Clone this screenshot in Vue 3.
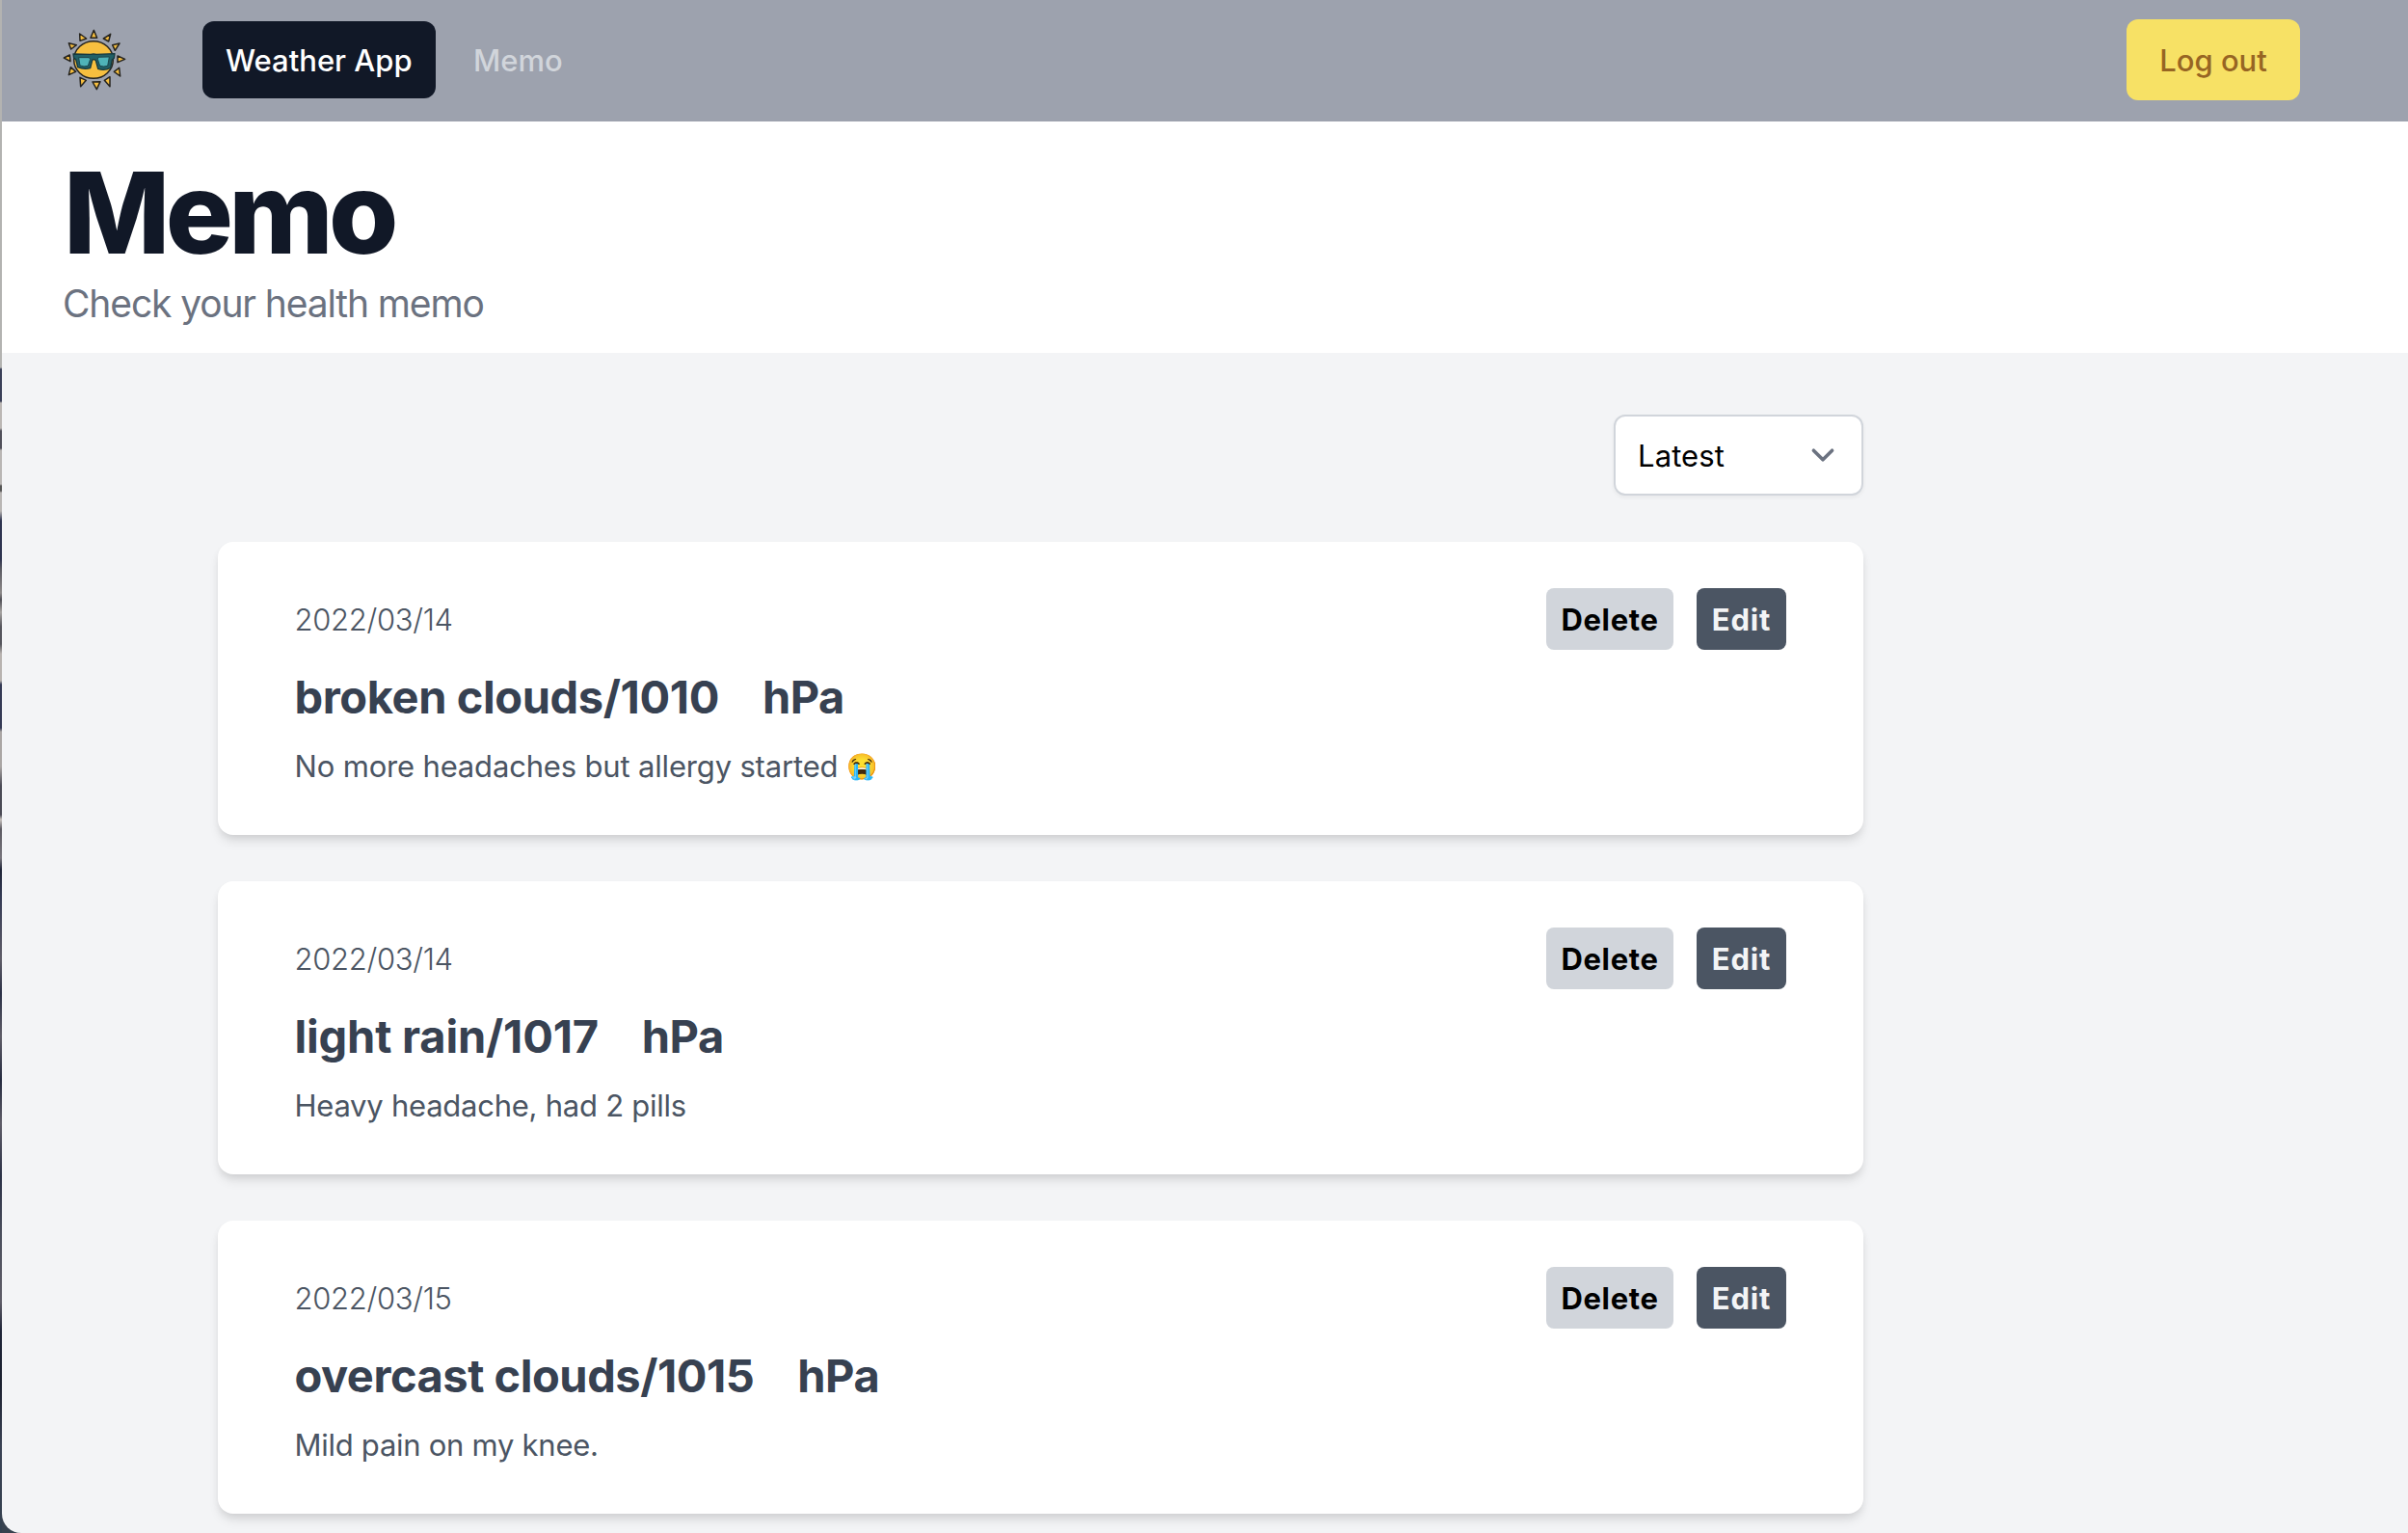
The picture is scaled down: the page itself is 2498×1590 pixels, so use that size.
<script setup>
const memos = [
  {
    id: 1,
    date: '2022/03/14',
    weather: 'broken clouds',
    pressure: 1010,
    text: 'No more headaches but allergy started',
    emoji: '😭',
    titleTracking: -0.4,
    textTracking: -0.17
  },
  {
    id: 2,
    date: '2022/03/14',
    weather: 'light rain',
    pressure: 1017,
    text: 'Heavy headache, had 2 pills',
    titleTracking: -0.2,
    textTracking: -0.25
  },
  {
    id: 3,
    date: '2022/03/15',
    weather: 'overcast clouds',
    pressure: 1015,
    text: 'Mild pain on my knee.',
    titleTracking: -0.476,
    textTracking: -0.27
  }
]

const rays = [
  '127,34 117,58 137,58',
  '83,45 84,67 104,60',
  '179,46 157,60 173,69',
  '49,74 56,93 73,80',
  '207,75 185,80 193,97',
  '34,120 52,111 54,131',
  '224,124 201,114 201,134',
  '49,173 55,149 71,163',
  '209,177 206,151 190,163',
  '86,209 84,181 103,190',
  '136,218 123,195 147,194',
  '177,209 177,179 160,190'
]
</script>

<template>
  <div class="desktop">
    <div class="window">
      <nav class="nav">
        <svg class="logo" viewBox="0 0 255 255" aria-hidden="true">
          <g fill="#f7bf3f" stroke="#26241f" stroke-width="4.5" stroke-linejoin="round">
            <polygon v-for="ray in rays" :key="ray" :points="ray" />
            <ellipse cx="126" cy="126" rx="61" ry="58" />
          </g>
          <g stroke="#17393f" stroke-linejoin="round">
            <path
              d="M63 108 L117 109 Q126 107 135 109 L192 107 L190 121 L184 126 L179 151 Q160 161 140 154 L133 128 Q126 122 122 128 L116 152 Q96 157 77 149 L71 125 L65 121 Z"
              fill="#216067"
              stroke-width="4"
            />
            <path d="M80 119 L112 119 L116 124 L109 145 Q96 149 84 144 Z" fill="#4fb3b8" stroke-width="2.5" />
            <path d="M141 118 L175 117 L170 145 Q158 149 146 145 L139 124 Z" fill="#4fb3b8" stroke-width="2.5" />
          </g>
        </svg>
        <a class="link active">Weather App</a>
        <a class="link">Memo</a>
        <button class="logout">Log out</button>
      </nav>

      <header class="header">
        <h1>Memo</h1>
        <p>Check your health memo</p>
      </header>

      <main class="content">
        <div class="sort">
          <span>Latest</span>
          <svg viewBox="0 0 20 20" aria-hidden="true">
            <path d="M6 8l4 4 4-4" fill="none" stroke="#6b7280" stroke-width="1.5" stroke-linecap="round" stroke-linejoin="round" />
          </svg>
        </div>

        <article v-for="memo in memos" :key="memo.id" class="card">
          <div class="top">
            <time>{{ memo.date }}</time>
            <button class="btn delete">Delete</button>
            <button class="btn edit">Edit</button>
          </div>
          <h2>
            <span :style="{ letterSpacing: memo.titleTracking + 'px' }">{{ memo.weather }}/{{ memo.pressure }}</span>
            <span class="unit">hPa</span>
          </h2>
          <p class="note">
            <span :style="{ letterSpacing: memo.textTracking + 'px' }">{{ memo.text }}</span>
            <span v-if="memo.emoji" class="emoji">{{ memo.emoji }}</span>
          </p>
        </article>
      </main>
    </div>
  </div>
</template>

<style>
body {
  margin: 0;
  overflow: hidden;
}
</style>

<style scoped>
.desktop {
  box-sizing: border-box;
  width: 100vw;
  height: 100vh;
  padding-left: 2px;
  overflow: hidden;
  font-family: Inter, 'Liberation Sans', sans-serif;
  background:
    linear-gradient(
      #b3b3b1 381px, #3a4058 383px, #3a4058 416px, #bbb7b4 418px, #bbb7b4 444px,
      #50505a 447px, #50505a 465px, #b9b6b4 467px, #b9b6b4 502px, #555 504px,
      #555 509px, #b9b6b4 511px, #b9b6b4 530px, #2e3450 540px, #2e3450 580px,
      #5a5a62 590px, #8d8a8a 615px, #4e4e55 622px, #a7a4a2 635px, #55555c 650px,
      #55555c 668px, #b8b3b0 678px, #b8b3b0 706px, #343a55 710px, #343a55 755px,
      #aaa6a4 759px, #aaa6a4 795px, #4a4a55 815px, #4a4a55 845px, #c9c4c0 850px,
      #5c5a62 860px, #77757c 890px, #1f2538 902px, #343a55 930px, #5f5d68 995px,
      #2b3147 1030px, #5f5d68 1075px, #252b40 1120px, #5f5d68 1165px, #2b3147 1220px,
      #4a4e5c 1280px, #5f5d68 1350px, #1f2538 1380px, #1b2030 1435px, #3a4254 1500px,
      #33404f 1590px
    )
    0 0 / 2px 100% no-repeat,
    #38424f;
}

.window {
  display: flex;
  flex-direction: column;
  height: 100%;
  overflow: hidden;
  background: #f3f4f6;
  border-bottom-left-radius: 20px;
}

.nav {
  display: flex;
  flex: none;
  align-items: center;
  box-sizing: border-box;
  height: 126px;
  padding: 0 112px 2px 53px;
  background: #9da2ae;
}

.logo {
  flex: none;
  width: 85px;
  height: 85px;
  margin-right: 70px;
}

.link {
  box-sizing: border-box;
  height: 80px;
  margin-right: 15px;
  padding: 1px 24px 0;
  border-radius: 12px;
  color: #d1d5db;
  font-size: 31px;
  font-weight: 500;
  line-height: 79px;
  white-space: nowrap;
}

.link.active {
  width: 242px;
  color: #fff;
  letter-spacing: 0;
  background: #111827;
}

.logout {
  width: 180px;
  height: 84px;
  margin-left: auto;
  padding: 1px 0 0;
  border: 0;
  border-radius: 12px;
  color: #976523;
  background: #f7e165;
  font: 500 31px Inter, 'Liberation Sans', sans-serif;
}

.header {
  flex: none;
  box-sizing: border-box;
  height: 240px;
  padding: 35px 63px 0;
  background: #fff;
}

h1 {
  margin: 0 0 0 1px;
  color: #111827;
  font-size: 117px;
  font-weight: 800;
  line-height: 120px;
  letter-spacing: -4.7px;
}

.header p {
  margin: 10px 0 0;
  color: #6b7280;
  font-size: 39px;
  line-height: 48px;
  letter-spacing: -1.13px;
}

.content {
  display: flex;
  flex-direction: column;
  width: 1707px;
  margin-left: 224px;
  padding-top: 64px;
}

.sort {
  display: flex;
  flex: none;
  align-items: center;
  align-self: flex-end;
  justify-content: space-between;
  box-sizing: border-box;
  width: 259px;
  height: 84px;
  margin-bottom: 48px;
  padding: 0 16px 0 23px;
  border: 2px solid #d1d5db;
  border-radius: 12px;
  background: #fff;
  box-shadow: 0 2px 4px rgba(0, 0, 0, 0.05);
  color: #000;
  font-size: 31px;
  letter-spacing: 0.1px;
}

.sort span {
  padding-top: 1px;
}

.sort svg {
  width: 48px;
  height: 48px;
}

.card {
  flex: none;
  box-sizing: border-box;
  height: 304px;
  margin-bottom: 48px;
  padding: 48px 80px 47px 79.5px;
  border-radius: 16px;
  background: #fff;
  box-shadow: 0 8px 12px -2px rgba(0, 0, 0, 0.1), 0 4px 8px -2px rgba(0, 0, 0, 0.08);
  color: #4b5563;
}

.top {
  display: flex;
  align-items: center;
  height: 64px;
}

time {
  margin-right: auto;
  font-size: 31px;
  font-weight: 300;
  letter-spacing: -0.32px;
}

.btn {
  height: 64px;
  padding: 1px 0 0;
  border: 0;
  border-radius: 8px;
  font: 700 31px Inter, 'Liberation Sans', sans-serif;
}

.delete {
  width: 132px;
  margin-right: 24px;
  color: #000;
  background: #d1d5db;
  letter-spacing: 0.64px;
}

.edit {
  width: 93px;
  color: #f3f4f6;
  background: #4b5563;
  letter-spacing: 0.8px;
}

h2 {
  display: flex;
  gap: 45px;
  margin: 21px 0 0;
  color: #374151;
  font-size: 47px;
  font-weight: 700;
  line-height: 56px;
}

.unit {
  letter-spacing: -0.5px;
}

.note {
  display: flex;
  gap: 8.5px;
  margin: 20px 0 0;
  font-size: 31px;
  line-height: 48px;
}

.emoji {
  font-size: 26px;
}
</style>
